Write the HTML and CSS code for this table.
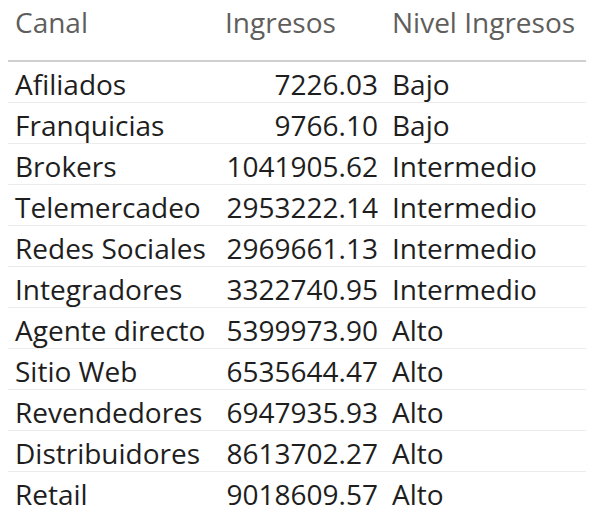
FILE: index.html
```html
<!DOCTYPE html>
<html lang="es">
<head>
<meta charset="utf-8">
<link rel="stylesheet" href="styles.css">
</head>
<body>
<div class="table">
  <div class="row head">
    <div class="cell c1">Canal</div>
    <div class="cell c2 left">Ingresos</div>
    <div class="cell c3">Nivel Ingresos</div>
  </div>
  <div class="row"><div class="cell c1">Afiliados</div><div class="cell c2">7226.03</div><div class="cell c3">Bajo</div></div>
  <div class="row"><div class="cell c1">Franquicias</div><div class="cell c2">9766.10</div><div class="cell c3">Bajo</div></div>
  <div class="row"><div class="cell c1">Brokers</div><div class="cell c2">1041905.62</div><div class="cell c3">Intermedio</div></div>
  <div class="row"><div class="cell c1">Telemercadeo</div><div class="cell c2">2953222.14</div><div class="cell c3">Intermedio</div></div>
  <div class="row"><div class="cell c1">Redes Sociales</div><div class="cell c2">2969661.13</div><div class="cell c3">Intermedio</div></div>
  <div class="row"><div class="cell c1">Integradores</div><div class="cell c2">3322740.95</div><div class="cell c3">Intermedio</div></div>
  <div class="row"><div class="cell c1">Agente directo</div><div class="cell c2">5399973.90</div><div class="cell c3">Alto</div></div>
  <div class="row"><div class="cell c1">Sitio Web</div><div class="cell c2">6535644.47</div><div class="cell c3">Alto</div></div>
  <div class="row"><div class="cell c1">Revendedores</div><div class="cell c2">6947935.93</div><div class="cell c3">Alto</div></div>
  <div class="row"><div class="cell c1">Distribuidores</div><div class="cell c2">8613702.27</div><div class="cell c3">Alto</div></div>
  <div class="row last"><div class="cell c1">Retail</div><div class="cell c2">9018609.57</div><div class="cell c3">Alto</div></div>
</div>
</body>
</html>
```
FILE: styles.css
```css
html, body {
  margin: 0;
  padding: 0;
  background: #ffffff;
}
body {
  font-family: "Open Sans", "Noto Sans", sans-serif;
  font-size: 28px;
  color: #1e1e1e;
}
.table {
  padding: 0 8px;
}
.row {
  display: grid;
  grid-template-columns: 209px 168px 201px;
  height: 40px;
  border-bottom: 1px solid #ececec;
  line-height: 44px;
  white-space: nowrap;
}
.row.head {
  height: 60px;
  line-height: 44px;
  border-bottom: 2px solid #cfcfcf;
  color: #605e5c;
}
.row.last {
  border-bottom: none;
}
.c1 {
  padding-left: 7px;
}
.c2 {
  text-align: right;
  padding-right: 7px;
}
.c2.left {
  text-align: left;
  padding-left: 8px;
  padding-right: 0;
}
.c3 {
  padding-left: 7px;
}
```
